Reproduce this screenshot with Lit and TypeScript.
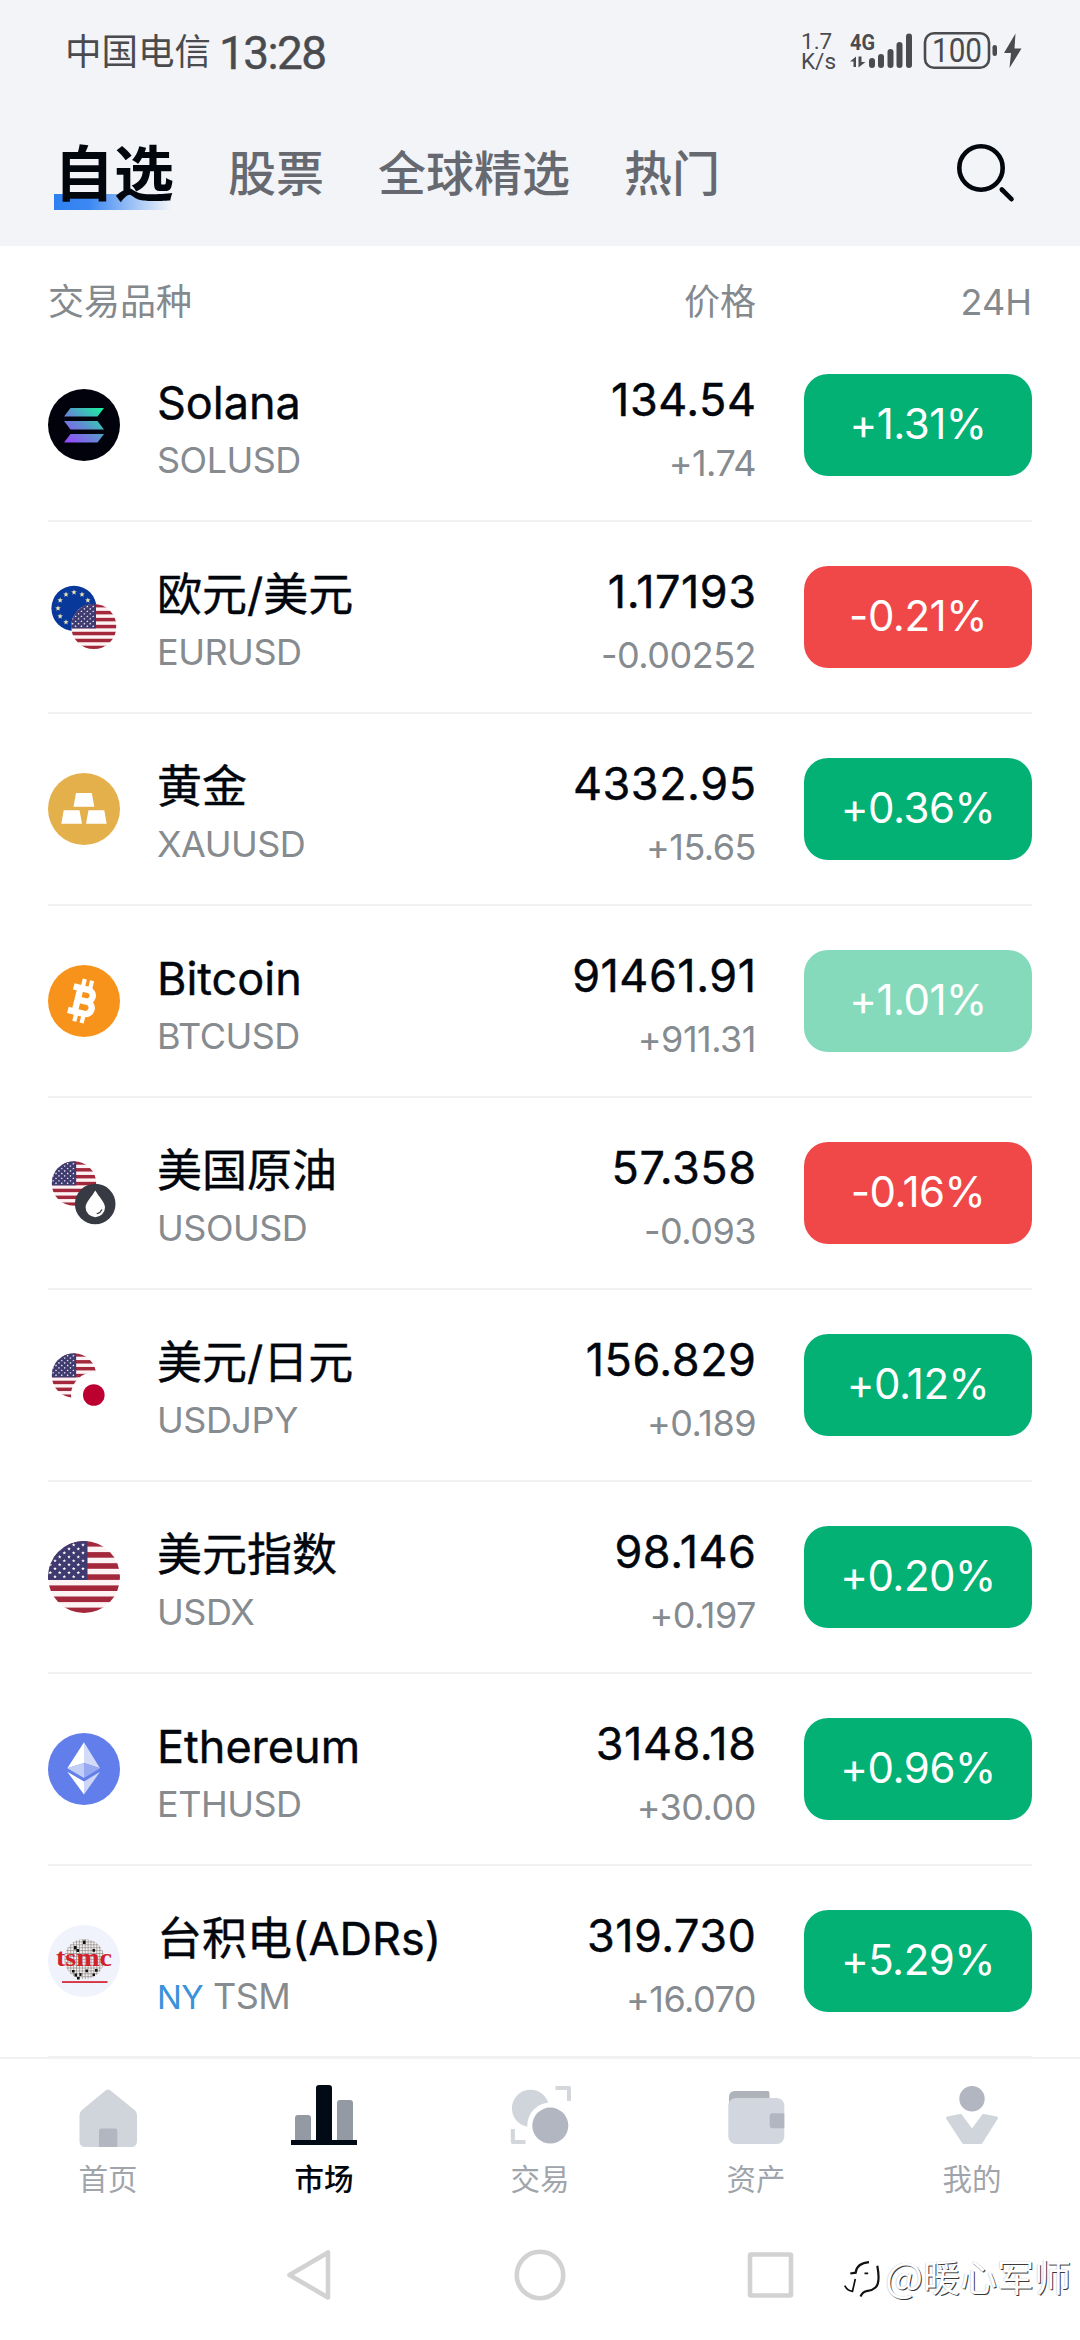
import { LitElement, css, html, svg } from "lit";
import type { SVGTemplateResult } from "lit";
import { customElement, property } from "lit/decorators.js";
import { classMap } from "lit/directives/class-map.js";

type IconName =
  | "sol"
  | "eurusd"
  | "gold"
  | "btc"
  | "oil"
  | "usdjpy"
  | "usdx"
  | "eth"
  | "tsm";

type Quote = {
  icon: IconName;
  name: string;
  symbol: string;
  exchange?: string;
  price: string;
  change: string;
  percent: string;
  fading?: boolean;
};

const QUOTES: Quote[] = [
  { icon: "sol", name: "Solana", symbol: "SOLUSD", price: "134.54", change: "+1.74", percent: "+1.31%" },
  { icon: "eurusd", name: "欧元/美元", symbol: "EURUSD", price: "1.17193", change: "-0.00252", percent: "-0.21%" },
  { icon: "gold", name: "黄金", symbol: "XAUUSD", price: "4332.95", change: "+15.65", percent: "+0.36%" },
  { icon: "btc", name: "Bitcoin", symbol: "BTCUSD", price: "91461.91", change: "+911.31", percent: "+1.01%", fading: true },
  { icon: "oil", name: "美国原油", symbol: "USOUSD", price: "57.358", change: "-0.093", percent: "-0.16%" },
  { icon: "usdjpy", name: "美元/日元", symbol: "USDJPY", price: "156.829", change: "+0.189", percent: "+0.12%" },
  { icon: "usdx", name: "美元指数", symbol: "USDX", price: "98.146", change: "+0.197", percent: "+0.20%" },
  { icon: "eth", name: "Ethereum", symbol: "ETHUSD", price: "3148.18", change: "+30.00", percent: "+0.96%" },
  { icon: "tsm", name: "台积电(ADRs)", symbol: "TSM", exchange: "NY", price: "319.730", change: "+16.070", percent: "+5.29%" },
];

const TABS = ["自选", "股票", "全球精选", "热门"];

/* ── Flags ── */

function starPath(cx: number, cy: number, r: number) {
  let d = "";
  for (let i = 0; i < 10; i++) {
    const a = (Math.PI / 5) * i - Math.PI / 2;
    const rr = i % 2 ? r * 0.42 : r;
    d += `${i ? "L" : "M"}${(cx + rr * Math.cos(a)).toFixed(2)} ${(cy + rr * Math.sin(a)).toFixed(2)}`;
  }
  return d + "Z";
}

const US_STARS = Array.from({ length: 9 }, (_, row) =>
  (row % 2 ? [2.3, 11.7, 21, 30.3] : [7, 16.3, 25.7, 35])
    .map((x) => starPath(x, 4 + row * 3.95, 1.9))
    .join(""),
).join("");

const EU_STARS = Array.from({ length: 12 }, (_, i) => {
  const a = (Math.PI / 6) * i;
  return starPath(26 + 16 * Math.sin(a), 27.3 - 16 * Math.cos(a), 2.9);
}).join("");

/** Round US flag, drawn on a 72 unit disc and scaled to radius r. */
function usFlag(cx: number, cy: number, r: number) {
  return svg`
    <clipPath id="disc"><circle cx="36" cy="36" r="36"/></clipPath>
    <g transform="translate(${cx - r} ${cy - r}) scale(${r / 36})">
      <g clip-path="url(#disc)">
        <rect width="72" height="72" fill="#fdf3f5"/>
        ${[0, 1, 2, 3, 4, 5, 6].map(
          (i) => svg`<rect y=${i * 11.1} width="72" height="5.6" fill="#a3283b"/>`,
        )}
        <rect width="39.5" height="39" fill="#3f3b70"/>
        <path d=${US_STARS} fill="#fff"/>
      </g>
    </g>
  `;
}

/* ── Instrument logos, viewBox 0 0 72 72 ── */

const LOGOS: Record<IconName, SVGTemplateResult> = {
  sol: svg`
    <linearGradient id="sol" gradientUnits="userSpaceOnUse" x1="20" y1="56" x2="52" y2="18">
      <stop offset="0" stop-color="#9945ff"/>
      <stop offset="0.5" stop-color="#5f8fd0"/>
      <stop offset="1" stop-color="#19f0a0"/>
    </linearGradient>
    <circle cx="36" cy="36" r="36" fill="#02020c"/>
    <path fill="url(#sol)" d="M22.5 19H56l-6.5 8.5H16ZM16 32h33.5L56 40.5H22.5ZM22.5 45H56l-6.5 8.5H16Z"/>
  `,
  eurusd: svg`
    <circle cx="26" cy="27.3" r="22.6" fill="#07389a"/>
    <path d=${EU_STARS} fill="#ece5b4"/>
    ${usFlag(45.8, 45.5, 22.6)}
  `,
  gold: svg`
    <circle cx="36" cy="36" r="36" fill="#e4b04b"/>
    <path fill="#fff" d="M28 20h15.800l2.500 13.700H25.500ZM15.700 37.300H31.500L34 50.700H13.300ZM40.500 37.300H56.300L58.700 50.700H38Z"/>
  `,
  btc: svg`
    <circle cx="36" cy="36" r="36" fill="#f7931a"/>
    <g transform="rotate(14 36 36)" fill="none" stroke="#fff">
      <path stroke-width="6.400" stroke-linejoin="round" d="M29.500 24.200V48.600M22.500 24.200H37.500a5.900 5.900 0 0 1 0 11.800H30M37.500 36h1.500a6.300 6.300 0 0 1 0 12.600H22.500"/>
      <path stroke-width="4.200" d="M31.500 14.500V23M39 14.500V23M31.500 49V58M39 49V58"/>
    </g>
  `,
  oil: svg`
    ${usFlag(26, 26.5, 22.3)}
    <circle cx="47.200" cy="47" r="20.300" fill="#373a42"/>
    <path fill="#fff" d="M47.300 33.500C51 40 57 45 57 50.500A9.700 9.700 0 0 1 37.600 50.500C37.600 45 43.600 40 47.300 33.500Z"/>
    <path fill="none" stroke="#373a42" stroke-width="1.200" stroke-linecap="round" d="M49.200 56.600Q52.600 55.800 53.800 52.800"/>
  `,
  usdjpy: svg`
    ${usFlag(26, 26.5, 22.3)}
    <circle cx="45.800" cy="46" r="22.800" fill="#fff"/>
    <circle cx="45.800" cy="46" r="10.800" fill="#bc0030"/>
  `,
  usdx: usFlag(36, 36, 36),
  eth: svg`
    <circle cx="36" cy="36" r="36" fill="#627eea"/>
    <path fill="#fff" d="M36 9.300V30L19.300 35.300Z"/>
    <path fill="#d3dbf8" d="M36 9.300V30L52 35.300Z"/>
    <path fill="#c3cef7" d="M36 30V45L19.300 35.300Z"/>
    <path fill="#97a9f0" d="M36 30V45L52 35.300Z"/>
    <path fill="#fff" d="M19.300 38.800L36 48.500V61.500Z"/>
    <path fill="#cdd6f8" d="M52 38.800L36 48.500V61.500Z"/>
  `,
  tsm: svg`
    <pattern id="wafer" width="2.900" height="2.900" patternUnits="userSpaceOnUse">
      <rect width="2.900" height="2.900" fill="#8d8a8a"/>
      <rect width="2.200" height="2.200" fill="#f6f3f1"/>
    </pattern>
    <circle cx="36" cy="36" r="36" fill="#f0f3fb"/>
    <circle cx="36.300" cy="34" r="20" fill="url(#wafer)"/>
    <path fill="#111" d="M35 15.500h2.600v3.600H35ZM26 21h2.600v3.500H26ZM28.500 24h2.600v3h-2.600ZM44.500 24h2.600v2.800h-2.600ZM24 45h2.600v2.600H24ZM37.500 44.500H40v2.800h-2.500ZM47 44h2.600v2.800H47ZM26.500 48.500h2.600v3h-2.600ZM31.500 48h2v3h-2ZM44.500 48.500H47v2.600h-2.500ZM29 52h2.600v2.600H29Z"/>
    <text class="tsmc" x="8" y="41.300" textLength="56" lengthAdjust="spacingAndGlyphs">tsmc</text>
    <rect x="14" y="56.200" width="45.500" height="1.700" fill="#d3202c"/>
  `,
};

/* ── Bottom bar icons, viewBox 0 0 72 72 ── */

const NAV_ITEMS = [
  {
    label: "首页",
    icon: svg`
      <path fill="#d0d5dc" d="M33.500 10.500Q36 8.300 38.500 10.500L62.500 30Q65 32 65 35V61Q65 67 59 67H13.500Q7.500 67 7.500 61V35Q7.500 32 10 30Z"/>
      <path fill="#b1b6c1" d="M27 67V50.500Q27 48.500 29 48.500H43.300Q45.300 48.500 45.300 50.500V67Z"/>
    `,
  },
  {
    label: "市场",
    active: true,
    icon: svg`
      <path fill="#939aa3" d="M7 61V38Q7 35 10 35H20Q23 35 23 38V61ZM49 61V23Q49 20 52 20H62Q65 20 65 23V61Z"/>
      <path fill="#020a15" d="M28 61V8Q28 5 31 5H41Q44 5 44 8V60H69V65H3V60H28Z"/>
    `,
  },
  {
    label: "交易",
    icon: svg`
      <circle cx="26.500" cy="28.300" r="18.600" fill="#d0d5dc"/>
      <circle cx="46.300" cy="45.600" r="23" fill="#fff"/>
      <circle cx="46.300" cy="45.600" r="18" fill="#b1b6c1"/>
      <path fill="none" stroke="#d3d6da" stroke-width="4" stroke-linejoin="round" d="M8.800 49V62H21.500M51.500 8H65V21"/>
    `,
  },
  {
    label: "资产",
    icon: svg`
      <path fill="#adb3b8" d="M9 30V17Q9 11 15 11H47.500Q49.500 11 49.500 13V24Z"/>
      <rect x="8.300" y="18" width="56" height="46" rx="7.500" fill="#d2d6de"/>
      <path fill="#b1b6c1" d="M64.300 33.200H52.500Q49.700 33.200 49.700 36V45.500Q49.700 48.300 52.500 48.300H64.300Z"/>
    `,
  },
  {
    label: "我的",
    icon: svg`
      <circle cx="36" cy="18.800" r="12.700" fill="#b1b6c1"/>
      <path fill="#d0d5dc" stroke="#d0d5dc" stroke-width="3" stroke-linejoin="round" d="M11.500 38L24.500 35.500L36 51L47.500 35.500L60.500 38L45 62.500H27.500Z"/>
    `,
  },
];

@customElement("quote-row")
export class QuoteRow extends LitElement {
  static styles = css`
    :host {
      display: flex;
      align-items: flex-start;
      box-sizing: border-box;
      height: 192px;
      border-bottom: 2px solid #f0f1f2;
    }

    .logo {
      width: 72px;
      height: 72px;
      margin: 59px 37px 0 0;
      flex: none;
    }

    .tsmc {
      font: bold 26px "Liberation Serif", serif;
      fill: #d3202c;
    }

    .title {
      flex: 1;
      padding-top: 43px;
    }

    .name,
    .price {
      font-size: 45px;
      line-height: 60px;
      color: #02060d;
      white-space: nowrap;
      -webkit-text-stroke: 0.4px #02060d;
    }

    .price {
      letter-spacing: 0.5px;
      margin-right: -0.5px;
    }

    .symbol,
    .change {
      font-size: 36px;
      line-height: 48px;
      letter-spacing: -0.5px;
      color: #868b90;
      white-space: nowrap;
    }

    .symbol {
      margin-top: 3px;
    }

    .exchange {
      font-size: 33px;
      color: #3a92da;
    }

    .numbers {
      padding-top: 40px;
      text-align: right;
    }

    .change {
      margin-top: 9px;
    }

    .pill {
      width: 228px;
      height: 102px;
      line-height: 100px;
      margin: 44px 0 0 48px;
      border-radius: 24px;
      flex: none;
      text-align: center;
      font-size: 42px;
      letter-spacing: -0.5px;
      color: #fff;
      background: #02b173;
    }

    .pill.down {
      background: #f04848;
    }

    .pill.fading {
      background: #85dabb;
    }
  `;

  @property({ attribute: false }) quote!: Quote;

  render() {
    const q = this.quote;
    return html`
      <svg class="logo" viewBox="0 0 72 72" aria-hidden="true">${LOGOS[q.icon]}</svg>
      <div class="title">
        <div class="name">${q.name}</div>
        <div class="symbol">
          ${q.exchange ? html`<span class="exchange">${q.exchange}</span> ` : ""}${q.symbol}
        </div>
      </div>
      <div class="numbers">
        <div class="price">${q.price}</div>
        <div class="change">${q.change}</div>
      </div>
      <div
        class=${classMap({
          pill: true,
          down: q.percent.startsWith("-"),
          fading: !!q.fading,
        })}
      >
        ${q.percent}
      </div>
    `;
  }
}

@customElement("app-root")
export class AppRoot extends LitElement {
  static styles = css`
    :host {
      display: flex;
      flex-direction: column;
      position: relative;
      width: 1080px;
      height: 2340px;
      overflow: hidden;
      background: #fff;
      font-family: Inter, "Noto Sans CJK SC", sans-serif;
    }

    .top {
      height: 246px;
      background: #f2f4f8;
    }

    .status {
      display: flex;
      align-items: center;
      height: 102px;
      padding: 0 50px 0 65px;
      color: #4a4b4f;
    }

    .carrier {
      font: 36.5px/48px "Noto Sans CJK SC", sans-serif;
      margin-bottom: 2px;
    }

    .clock {
      flex: 1;
      margin-left: 8px;
      padding-top: 3px;
      font: 46px/60px Roboto, sans-serif;
      letter-spacing: -1.6px;
      -webkit-text-stroke: 0.4px #4a4b4f;
    }

    .speed {
      font: 22.5px/20px Roboto, sans-serif;
      margin-right: 12px;
    }

    .indicators {
      width: 182px;
      height: 40px;
      overflow: visible;
      fill: #4a4b4f;
    }

    .net {
      font: bold 22px Roboto, sans-serif;
    }

    .level {
      font: 33px Roboto, sans-serif;
    }

    .tabs {
      display: flex;
      align-items: center;
      gap: 54px;
      height: 144px;
      padding: 0 60px 0 54px;
      font-size: 48px;
      line-height: 72px;
      font-weight: 500;
      color: #666a70;
    }

    .tab.active {
      font-size: 60px;
      font-weight: 700;
      color: #02060d;
      background: linear-gradient(90deg, #2e80f2, #3c88f3 30%, #f2f4f8) 0 56px /
        117px 21px no-repeat;
    }

    .search {
      width: 66px;
      height: 66px;
      margin-left: auto;
      fill: none;
      stroke: #02060d;
      stroke-width: 4.6;
      stroke-linecap: round;
    }

    .columns {
      display: flex;
      height: 84px;
      padding: 0 48px;
      font-size: 36px;
      line-height: 112px;
      color: #84898e;
    }

    .col-name {
      flex: 1;
    }

    .col-day {
      width: 276px;
      text-align: right;
    }

    .list {
      padding: 0 48px;
    }

    .nav {
      display: grid;
      grid-template-columns: repeat(5, 1fr);
      height: 154px;
      margin-top: -1px;
      border-top: 2px solid #f0f2f2;
    }

    .item {
      display: flex;
      flex-direction: column;
      align-items: center;
      padding-top: 21px;
      font-size: 29.5px;
      line-height: 42px;
      color: #a0a5ab;
    }

    .item.active {
      color: #02060d;
      font-weight: 500;
    }

    .item svg {
      width: 72px;
      height: 72px;
      margin-bottom: 6px;
    }

    .system {
      display: flex;
      align-items: center;
      justify-content: center;
      gap: 174px;
      height: 131px;
    }

    .system svg {
      width: 56px;
      height: 56px;
      fill: none;
      stroke: #d2d2d2;
      stroke-width: 4.6;
      stroke-linejoin: round;
    }

    .watermark {
      position: absolute;
      right: 9px;
      bottom: 37px;
      display: flex;
      align-items: center;
      gap: 4px;
      font: 37px/54px "Noto Sans CJK SC", sans-serif;
      color: #fff;
      text-shadow:
        1.1px 1.1px 0 #3a3a3a,
        -0.5px -0.4px 1px #c8c8c8;
    }

    .at {
      font-size: 40px;
    }

    .watermark svg {
      width: 38px;
      height: 42px;
      margin-top: 8px;
    }
  `;

  render() {
    return html`
      <div class="top">
        <div class="status">
          <span class="carrier">中国电信</span>
          <span class="clock">13:28</span>
          <div class="speed">
            <div>1.7</div>
            <div>K/s</div>
          </div>
          <svg class="indicators" viewBox="848 31 182 40">
            <text class="net" x="850" y="49.500" textLength="25" lengthAdjust="spacingAndGlyphs">4G</text>
            <path d="M850 61.500L856 56.500V67H853.500V61.500ZM858.500 56.500H861.500V62H865.500L858.500 67.500Z" />
            <rect x="869" y="58" width="6" height="10" rx="3" />
            <rect x="878" y="54" width="6" height="14" rx="3" />
            <rect x="887.500" y="49" width="6" height="19" rx="3" />
            <rect x="896.500" y="42" width="6" height="26" rx="3" />
            <rect x="906" y="33.500" width="6" height="34.500" rx="3" />
            <rect x="925" y="33.300" width="64" height="34.400" rx="9" fill="none" stroke="#4a4b4f" stroke-width="2.600" />
            <text class="level" x="932" y="62" textLength="50" lengthAdjust="spacingAndGlyphs">100</text>
            <rect x="992.500" y="45" width="4.500" height="11" rx="2.200" />
            <path d="M1015.500 33.500L1004 53H1011L1009.500 68L1021.500 48.500H1014.500Z" />
          </svg>
        </div>
        <div class="tabs">
          ${TABS.map(
            (label, i) => html`<span class=${classMap({ tab: true, active: i === 0 })}>${label}</span>`,
          )}
          <svg class="search" viewBox="0 0 66 66">
            <circle cx="27" cy="27" r="21.700" />
            <path d="M47.800 48.500L57.500 58.200" />
          </svg>
        </div>
      </div>
      <div class="columns">
        <span class="col-name">交易品种</span>
        <span>价格</span>
        <span class="col-day">24H</span>
      </div>
      <div class="list">
        ${QUOTES.map((quote) => html`<quote-row .quote=${quote}></quote-row>`)}
      </div>
      <div class="nav">
        ${NAV_ITEMS.map(
          (item) => html`
            <div class=${classMap({ item: true, active: !!item.active })}>
              <svg viewBox="0 0 72 72">${item.icon}</svg>
              <span>${item.label}</span>
            </div>
          `,
        )}
      </div>
      <div class="system">
        <svg viewBox="0 0 56 56"><path d="M46 5.500V50.500L7.500 28Z" /></svg>
        <svg viewBox="0 0 56 56"><circle cx="28" cy="28" r="23.200" /></svg>
        <svg viewBox="0 0 56 56"><rect x="8" y="7.500" width="41" height="41" rx="1" /></svg>
      </div>
      <div class="watermark">
        <svg viewBox="840 2265 38 42" fill="none" stroke="#111" stroke-width="2.200">
          <path d="M847.300 2279.500L852.700 2278.700Q853.500 2269.500 866 2268.200" />
          <path d="M861.500 2279.400H865.200M852.300 2285L849.500 2297.300Q844.500 2297 841.700 2291.700" stroke-width="1.700" />
          <path d="M874.300 2271.700Q877.500 2289 872.500 2293.500Q868.500 2297 864.500 2296.800Q859.500 2297.500 857.500 2302.500" />
        </svg>
        <span><span class="at">@</span>暖心军师</span>
      </div>
    `;
  }
}
